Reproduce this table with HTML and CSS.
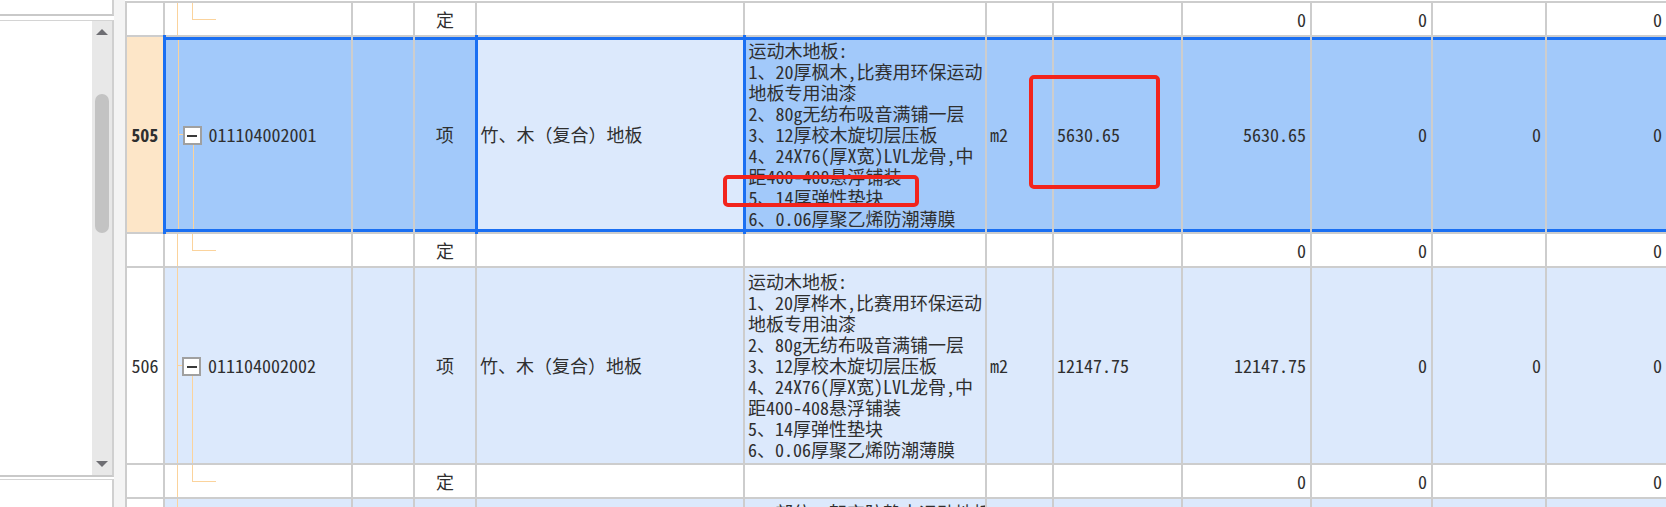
FILE: index.html
```html
<!DOCTYPE html>
<html lang="zh-CN">
<head>
<meta charset="utf-8">
<title>清单</title>
<link rel="stylesheet" href="styles.css">
</head>
<body>
<div class="app">
  <aside class="side">
    <div class="side-top"></div>
    <div class="side-list">
      <div class="list-body"></div>
      <div class="vscroll">
        <svg class="arrow" width="12" height="6" viewBox="0 0 12 6"><polygon points="0,6 6,0 12,6" fill="#6e6e73"/></svg>
        <div class="thumb"></div>
        <div class="spacer"></div>
        <svg class="arrow" width="12" height="6" viewBox="0 0 12 6"><polygon points="0,0 12,0 6,6" fill="#6e6e73"/></svg>
      </div>
    </div>
    <div class="side-bottom"></div>
  </aside>
  <div class="splitter"></div>
  <main class="grid-wrap">
    <table class="grid">
      <colgroup>
        <col class="w-num"><col class="w-code"><col class="w-cat"><col class="w-type"><col class="w-name"><col class="w-desc"><col class="w-unit"><col class="w-qty"><col class="w-qty2"><col class="w-a"><col class="w-b"><col class="w-c">
      </colgroup>
      <tbody>
        <tr class="r-ding">
          <td class="num"></td>
          <td class="code leaf"></td>
          <td></td>
          <td class="c">定</td>
          <td></td><td></td><td></td><td></td>
          <td class="r">0</td><td class="r">0</td><td></td><td class="r">0</td>
        </tr>
        <tr class="r-item sel">
          <td class="num cur">505</td>
          <td class="code node"><span class="fold"></span>011104002001</td>
          <td></td>
          <td class="c">项</td>
          <td class="cell-sel">竹、木（复合）地板</td>
          <td class="desc">运动木地板:<br>1、20厚枫木,比赛用环保运动<br>地板专用油漆<br>2、80g无纺布吸音满铺一层<br>3、12厚校木旋切层压板<br>4、24X76(厚X宽)LVL龙骨,中<br>距400-408悬浮铺装<br>5、14厚弹性垫块<br>6、0.06厚聚乙烯防潮薄膜</td>
          <td>m2</td>
          <td>5630.65</td>
          <td class="r">5630.65</td>
          <td class="r">0</td>
          <td class="r">0</td>
          <td class="r">0</td>
        </tr>
        <tr class="r-ding">
          <td class="num"></td>
          <td class="code leaf"></td>
          <td></td>
          <td class="c">定</td>
          <td></td><td></td><td></td><td></td>
          <td class="r">0</td><td class="r">0</td><td></td><td class="r">0</td>
        </tr>
        <tr class="r-item alt">
          <td class="num">506</td>
          <td class="code node"><span class="fold"></span>011104002002</td>
          <td></td>
          <td class="c">项</td>
          <td>竹、木（复合）地板</td>
          <td class="desc">运动木地板:<br>1、20厚桦木,比赛用环保运动<br>地板专用油漆<br>2、80g无纺布吸音满铺一层<br>3、12厚校木旋切层压板<br>4、24X76(厚X宽)LVL龙骨,中<br>距400-408悬浮铺装<br>5、14厚弹性垫块<br>6、0.06厚聚乙烯防潮薄膜</td>
          <td>m2</td>
          <td>12147.75</td>
          <td class="r">12147.75</td>
          <td class="r">0</td>
          <td class="r">0</td>
          <td class="r">0</td>
        </tr>
        <tr class="r-ding r-last">
          <td class="num"></td>
          <td class="code leaf"></td>
          <td></td>
          <td class="c">定</td>
          <td></td><td></td><td></td><td></td>
          <td class="r">0</td><td class="r">0</td><td></td><td class="r">0</td>
        </tr>
        <tr class="r-item alt r-next">
          <td class="num">507</td>
          <td class="code node"><span class="fold"></span>011104002003</td>
          <td></td>
          <td class="c">项</td>
          <td>竹、木（复合）地板</td>
          <td class="desc top">1、部位：架空防静电运动地板<br>2、运动木地板</td>
          <td>m2</td>
          <td></td>
          <td class="r"></td>
          <td class="r">0</td>
          <td class="r">0</td>
          <td class="r">0</td>
        </tr>
      </tbody>
    </table>
    <div class="mark mark-desc"></div>
    <div class="mark mark-qty"></div>
  </main>
</div>
</body>
</html>
```

FILE: styles.css
```css
* { box-sizing: border-box; }

html, body {
  margin: 0;
  padding: 0;
  background: #ffffff;
}

body {
  width: 1666px;
  height: 507px;
  overflow: hidden;
  font-family: "Noto Sans Mono CJK SC", "Noto Sans CJK SC", "Liberation Mono", monospace;
  color: #2f2f2f;
}

.app {
  display: flex;
  height: 507px;
}

/* ---------- left panel ---------- */
.side {
  width: 114px;
  flex: none;
  display: flex;
  flex-direction: column;
}

.side-top {
  flex: none;
  height: 16px;
  margin-bottom: 4px;
  border-bottom: 2px solid #c9c9c9;
  border-right: 2px solid #d0d0d0;
}

.side-list {
  flex: none;
  height: 457px;
  display: flex;
  border-top: 1px solid #d4d4d4;
  border-bottom: 2px solid #c9c9c9;
  border-right: 2px solid #d0d0d0;
}

.list-body { flex: 1; }

.vscroll {
  width: 20px;
  background: #e8e8e8;
  display: flex;
  flex-direction: column;
  align-items: center;
  padding: 8px 0 8px;
}

.arrow { flex: none; display: block; }

.thumb {
  flex: none;
  width: 14px;
  height: 139px;
  margin-top: 59px;
  border-radius: 7px;
  background: #c3c3c3;
}

.spacer { flex: 1; }

.side-bottom {
  flex: 1;
  margin-top: 2px;
  border-top: 1px solid #d4d4d4;
  border-right: 2px solid #d0d0d0;
}

.splitter {
  width: 11px;
  flex: none;
  background: #f4f4f4;
}

/* ---------- grid ---------- */
.grid-wrap {
  flex: 1;
  min-width: 0;
  overflow: hidden;
  position: relative;
  padding-top: 1px;
}

.grid {
  border-collapse: collapse;
  table-layout: fixed;
  width: 1541px;
  font-size: 18px;
  line-height: 21px;
}

.w-num { width: 38px; }
.w-code { width: 188px; }
.w-cat { width: 62px; }
.w-type { width: 62px; }
.w-name { width: 268px; }
.w-desc { width: 242px; }
.w-unit { width: 67px; }
.w-qty { width: 129px; }
.w-qty2 { width: 129px; }
.w-a { width: 121px; }
.w-b { width: 114px; }
.w-c { width: 121px; }

.grid td {
  border: 2px solid #cdcdcd;
  padding: 0 3px;
  white-space: nowrap;
  overflow: hidden;
  vertical-align: middle;
}

.r-ding { height: 34px; }
.r-item { height: 197px; }

.grid td.c { text-align: center; }
.grid td.r { text-align: right; padding-right: 4px; }
.grid td.num { text-align: center; padding: 0; }

.grid td.desc.top { vertical-align: top; padding-top: 3px; }

/* tree connectors */
.grid td.code {
  padding-left: 17px;
  background-repeat: no-repeat;
}

.grid td.leaf {
  background-image:
    linear-gradient(#fbd39c, #fbd39c),
    linear-gradient(#fbd39c, #fbd39c),
    linear-gradient(#fbd39c, #fbd39c);
  background-size: 1px 100%, 1px 50%, 24px 1px;
  background-position: 12px 0, 27px 0, 27px center;
}

.grid td.node {
  background-image:
    linear-gradient(#fbd39c, #fbd39c),
    linear-gradient(#fbd39c, #fbd39c),
    linear-gradient(#fbd39c, #fbd39c);
  background-size: 1px 100%, 5px 1px, 1px calc(50% - 9px);
  background-position: 12px 0, 12px center, 27px bottom;
}

.fold {
  display: inline-block;
  vertical-align: middle;
  width: 19px;
  height: 19px;
  margin: -2px 7px 0 0;
  border: 2px solid #a0a0a0;
  background:
    linear-gradient(#3a3a3a, #3a3a3a) center / 10px 2px no-repeat,
    #ffffff;
}

/* row states */
.alt td { background-color: #dce9fc; }
.alt td.num { background-color: #ffffff; }

.sel td {
  background-color: #a2c9fa;
  box-shadow: inset 0 3px 0 #1a6ff2, inset 0 -3px 0 #1a6ff2;
}

.sel td.num {
  background-color: #fde6c8;
  box-shadow: none;
  font-weight: bold;
}

.sel td.code { border-left: 3px solid #1a6ff2; }

.sel td.cell-sel {
  background-color: #dce9fc;
  border-left: 3px solid #1a6ff2;
  border-right: 3px solid #1a6ff2;
}

/* annotation marks */
.mark {
  position: absolute;
  border: 4px solid #f2241c;
  border-radius: 5px;
}

.mark-desc {
  left: 598px;
  top: 175px;
  width: 196px;
  height: 32px;
}

.mark-qty {
  left: 904px;
  top: 75px;
  width: 131px;
  height: 114px;
}
```
